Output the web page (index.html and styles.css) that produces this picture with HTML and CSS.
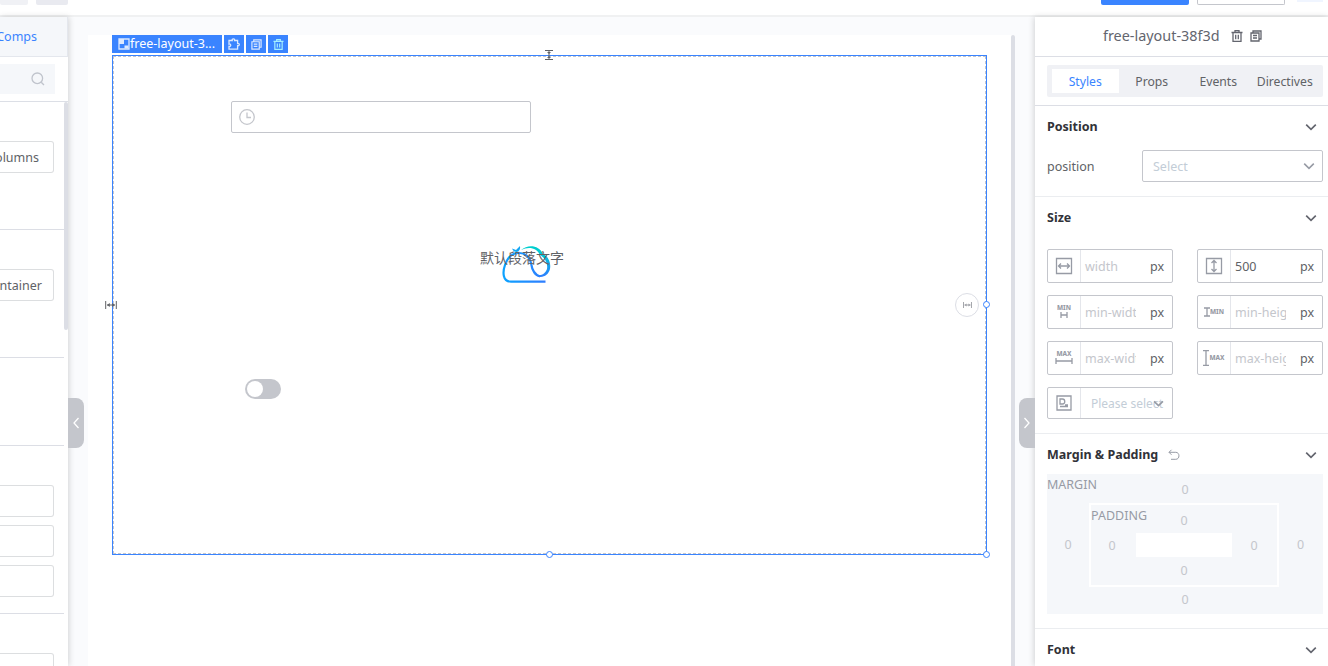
FILE: index.html
```html
<!DOCTYPE html>
<html lang="en">
<head>
<meta charset="utf-8">
<title>Layout designer</title>
<link rel="stylesheet" href="styles.css">
</head>
<body>
<svg class="symbols" aria-hidden="true">
  <symbol id="trash" viewBox="0 0 12 12"><path d="M.5 2.5h11M4 2V.7h4V2M2 3v8.300h8V3M4.700 4.800v4.400M7.300 4.800v4.400"/></symbol>
  <symbol id="copy" viewBox="0 0 12 12"><path d="M3 2.500V1h8v8H9.500M1 3h8v8H1zM3 5.500h4M3 8h4"/></symbol>
  <symbol id="down" viewBox="0 0 12 12"><path d="M1.200 3.700 6 8.300l4.800-4.600"/></symbol>
  <symbol id="span" viewBox="0 0 12 10"><path d="M.7 1v8M11.300 1v8M2 5h8"/><path class="solid" d="M2 5l2.800-2v4zM10 5l-2.800-2v4z"/></symbol>
</svg>
<header class="topbar">
  <span class="chip chip-a"></span><span class="chip chip-b"></span>
  <span class="action primary"></span><span class="action"></span><span class="action-more"></span>
</header>
<main class="workspace">
  <aside class="comps">
    <div class="comps-tab">Comps</div>
    <div class="search-row"><div class="search">
      <svg width="14" height="14" viewBox="0 0 14 14"><circle cx="6.300" cy="6.300" r="5.300"/><path d="M10.200 10.200l2.800 2.800"/></svg>
    </div></div>
    <div class="comps-list">
      <section class="group tall"><div class="item">olumns</div></section>
      <section class="group tall"><div class="item container">ontainer</div></section>
      <section class="group short"></section>
      <section class="group triple"><div class="item"></div><div class="item"></div><div class="item"></div></section>
      <section class="group"><div class="item"></div></section>
      <i class="list-scroll"></i>
    </div>
  </aside>

  <div class="stage">
    <div class="page">
      <div class="toolbar">
        <span class="node-name"><svg width="12" height="12" viewBox="0 0 12 12"><path d="M1 1h10v10H1z"/><path class="solid" d="M1 1h5v5H1zM6.500 7.500h4v3h-4z"/></svg><span>free-layout-3...</span></span>
        <span class="tool"><svg width="12" height="12" viewBox="0 0 12 12"><path d="M1 2.500h3.200c-.6-2.200 3-2.200 2.400 0h3v3c2.300-.5 2.300 2.700 0 2.200v3.500H1V8.300c2.300.6 2.300-2.800 0-2.200z"/></svg></span>
        <span class="tool"><svg width="11" height="11"><use href="#copy"/></svg></span>
        <span class="tool cyan"><svg width="11" height="11"><use href="#trash"/></svg></span>
      </div>
      <div class="free-layout">
        <div class="date-input"><svg width="16" height="16" viewBox="0 0 16 16"><circle cx="8" cy="8" r="7.300"/><path d="M8 3.500v5h4"/></svg></div>
        <svg class="cloud" width="50" height="40" viewBox="0 0 50 40">
          <defs>
            <linearGradient id="body" x1="0" y1="0" x2="1" y2="0"><stop offset="0" stop-color="#0ca2ff"/><stop offset="1" stop-color="#2f7dff"/></linearGradient>
            <linearGradient id="lobe" x1="0" y1="0" x2="0" y2="1"><stop offset="0" stop-color="#00d0cc"/><stop offset=".35" stop-color="#00c0dc"/><stop offset="1" stop-color="#2f7dff"/></linearGradient>
          </defs>
          <path d="M43.500 36.700H9C.5 36.500.5 27 3 20 6 11 12 7 18 8c6 .5 10 5 11 10 1 7 4 12 9 13.500" fill="none" stroke="url(#body)" stroke-width="2.200"/>
          <path d="M19 5C26-1 37 0 41 9c6 3 8 9 7 15-2 8-11 11-17 4 6 4 12 2 14-4 1-6-2-11-7-14C35 3 27 1 19 5z" fill="url(#lobe)"/>
          <path d="M10 3.500 14 5l4-4c.5 3-.5 5-3 6-2.500 0-4-1-5-3.500z" fill="#12a6f5"/>
        </svg>
        <p class="paragraph">默认段落文字</p>
        <div class="switch"></div>
        <svg class="grip-top" width="10" height="12" viewBox="0 0 10 12"><path d="M1 1.500h8M1 10.500h8M5 2v8"/><path class="solid" d="M5 5l2-2H3zM5 7l2 2H3z"/></svg>
        <svg class="grip-left" width="12" height="10"><use href="#span"/></svg>
        <div class="width-lock"><svg width="9" height="8"><use href="#span"/></svg></div>
        <i class="handle east"></i><i class="handle south"></i><i class="handle corner"></i>
      </div>
      <i class="page-scroll"></i>
    </div>
    <div class="collapse left"><svg width="8" height="12" viewBox="0 0 8 12"><path d="M6.500 1 2 6l4.500 5"/></svg></div>
    <div class="collapse right"><svg width="8" height="12" viewBox="0 0 8 12"><path d="M1.500 1 6 6l-4.500 5"/></svg></div>
  </div>

  <aside class="inspector">
    <div class="title"><span class="title-text">free-layout-38f3d</span><svg width="12" height="12"><use href="#trash"/></svg><svg width="12" height="12"><use href="#copy"/></svg></div>
    <div class="tabs-row"><nav class="tabs"><span class="tab active">Styles</span><span class="tab">Props</span><span class="tab">Events</span><span class="tab">Directives</span></nav></div>

    <section class="block">
      <h2>Position<svg class="chev" width="12" height="12"><use href="#down"/></svg></h2>
      <div class="position-row"><span class="prop-name">position</span><div class="select"><span>Select</span><svg width="12" height="12"><use href="#down"/></svg></div></div>
    </section>

    <section class="block">
      <h2>Size<svg class="chev" width="12" height="12"><use href="#down"/></svg></h2>
      <div class="sizes">
        <div class="field"><span class="icon"><svg width="18" height="18" viewBox="0 0 18 18"><path d="M1.500 1.500h15v15h-15zM3.500 9h11M6 6.500 3.500 9 6 11.500M12 6.500 14.500 9 12 11.500"/></svg></span><span class="value">width</span><span class="unit">px</span></div>
        <div class="field"><span class="icon"><svg width="18" height="18" viewBox="0 0 18 18"><path d="M1.500 1.500h15v15h-15zM9 3.500v11M6.500 6 9 3.500 11.500 6M6.500 12 9 14.500 11.500 12"/></svg></span><span class="value filled">500</span><span class="unit">px</span></div>
        <div class="field"><span class="icon stack"><b>MIN</b><svg width="8" height="6" viewBox="0 0 8 6"><path d="M1 0v6M7 0v6M1 3h6"/></svg></span><span class="value">min-width</span><span class="unit">px</span></div>
        <div class="field"><span class="icon side"><svg width="6" height="10" viewBox="0 0 6 10"><path d="M0 1h6M0 9h6M3 1v8"/></svg><b>MIN</b></span><span class="value">min-height</span><span class="unit">px</span></div>
        <div class="field"><span class="icon stack"><b>MAX</b><svg width="18" height="6" viewBox="0 0 18 6"><path d="M1 0v6M17 0v6M1 3h16"/></svg></span><span class="value">max-width</span><span class="unit">px</span></div>
        <div class="field"><span class="icon side"><svg width="6" height="16" viewBox="0 0 6 16"><path d="M0 .7h6M0 15.300h6M3 1v14"/></svg><b>MAX</b></span><span class="value">max-height</span><span class="unit">px</span></div>
        <div class="field display"><span class="icon"><svg width="16" height="16" viewBox="0 0 16 16"><path d="M1 1h14v14H1zM4 4h2.500c3 0 3 5 0 5H4zM4 11.500h8M9 10h3"/></svg></span><span class="value">Please select</span><svg class="field-chev" width="11" height="11"><use href="#down"/></svg></div>
      </div>
    </section>

    <section class="block">
      <h2>Margin &amp; Padding<svg class="undo" width="12" height="12" viewBox="0 0 12 12"><path d="M3.500.8 1 3.300l2.500 2.500M1 3.300h6.800c4.200 0 4.200 7 0 7H3"/></svg><svg class="chev" width="12" height="12"><use href="#down"/></svg></h2>
      <div class="margin-box">
        <span class="box-label">MARGIN</span>
        <span class="n top">0</span><span class="n west">0</span>
        <div class="padding-box">
          <span class="box-label">PADDING</span>
          <span class="n top">0</span><span class="n west">0</span><div class="core"></div><span class="n east-n">0</span><span class="n bottom">0</span>
        </div>
        <span class="n east-n">0</span><span class="n bottom">0</span>
      </div>
    </section>
    <section class="block"><h2>Font<svg class="chev" width="12" height="12"><use href="#down"/></svg></h2></section>
  </aside>
</main>
</body>
</html>
```

FILE: styles.css
```css
* { box-sizing: border-box; }
body { margin: 0; width: 1328px; height: 666px; overflow: hidden; background: #fff; color: #606266; font: 13px/20px "Noto Sans", "Noto Sans CJK SC", sans-serif; }
svg { display: block; flex: none; fill: none; stroke: currentColor; stroke-width: 1.3; }
.solid { fill: currentColor; stroke: none; }
.symbols { position: absolute; width: 0; height: 0; }

.topbar { display: flex; align-items: flex-start; height: 17px; border-bottom: 2px solid #f0f1f2; }
.chip { height: 5px; background: #e9eaf0; border-radius: 0 0 2px 2px; }
.chip-a { width: 28px; background: #f0f1f5; }
.chip-b { width: 32px; margin-left: 8px; }
.action { width: 88px; height: 5px; margin-left: 8px; border: 1px solid #c4c6cc; border-top: 0; border-radius: 0 0 2px 2px; }
.action.primary { margin-left: 1033px; border: 0; background: #3a84ff; }
.action-more { width: 26px; height: 2px; margin-left: 12px; background: #f0f5ff; }
.workspace { display: flex; height: 649px; }

.comps { position: relative; z-index: 2; width: 68px; flex: none; background: #fff; box-shadow: 1px 0 6px rgba(0,0,0,.16); }
.comps-tab { height: 40px; padding-right: 30px; border: 1px solid #e4e7ed; border-width: 0 1px 1px 0; background: #f5f7fa; color: #3a84ff; font-size: 12.500px; line-height: 40px; display: flex; justify-content: flex-end; }
.search-row { height: 45px; padding-top: 7px; border-bottom: 1px solid #dcdfe6; }
.search { display: flex; align-items: center; justify-content: flex-end; width: 55px; height: 30px; padding-right: 10px; background: #f5f7fa; color: #c0c4cc; }
.comps-list { position: relative; height: 564px; overflow: hidden; }
.group { display: flex; flex-direction: column; gap: 8px; width: 64px; padding-top: 39px; border-bottom: 1px solid #dcdee5; }
.tall { height: 128px; }
.short { height: 88px; }
.triple { height: 168px; }
.item { display: flex; align-items: center; justify-content: flex-end; flex: none; width: 54px; height: 32px; padding: 2px 14px 0 0; border: 1px solid #dcdee0; border-left: 0; border-radius: 0 3px 3px 0; font-size: 12.500px; }
.item.container { padding-right: 11px; }
.list-scroll { position: absolute; top: 0; right: 0; width: 4px; height: 228px; border-radius: 2px; background: #dcdee5; }

.stage { position: relative; width: 967px; padding: 18px 20px 0; background: #fafbfd; }
.page { position: relative; height: 631px; background: #fff; }
.page-scroll { position: absolute; top: 0; right: 0; width: 4px; height: 100%; background: #dcdee5; border-radius: 2px 2px 0 0; }
.toolbar { display: flex; gap: 2px; height: 18px; margin-left: 24px; color: #fff; }
.node-name { display: flex; align-items: center; width: 110px; padding-left: 6px; background: #3a84ff; font-size: 12.500px; white-space: nowrap; }
.node-name svg { color: #dce9ff; }
.tool { display: grid; place-items: center; width: 20px; background: #3a84ff; color: #dce9ff; }
.tool.cyan { color: #a5f0ff; }
.free-layout { position: relative; width: 875px; height: 500px; margin: 2px 0 0 24px; border: 1px solid #3a84ff; outline: 1px dashed #c4c6cc; outline-offset: -2px; }
.date-input { position: absolute; left: 118px; top: 45px; width: 300px; height: 32px; padding: 7px; border: 1px solid #c4c6cc; border-radius: 2px; color: #c4c6cc; }
.cloud { position: absolute; left: 389px; top: 189px; stroke: none; }
.paragraph { position: absolute; left: 367px; top: 192px; margin: 0; font-size: 14px; white-space: nowrap; }
.switch { position: absolute; left: 132px; top: 323px; width: 36px; height: 20px; border-radius: 10px; background: #c4c6cc; }
.switch::after { content: ""; display: block; width: 16px; height: 16px; margin: 2px; border-radius: 50%; background: #fff; }
.grip-top { position: absolute; left: 431px; top: -7px; stroke-width: 1; }
.grip-left { position: absolute; left: -8px; top: 244px; stroke-width: 1; }
.width-lock { position: absolute; left: 842px; top: 237px; display: grid; place-items: center; width: 24px; height: 24px; border: 1px solid #dcdee5; border-radius: 50%; color: #a0a2a8; }
.handle { position: absolute; width: 7px; height: 7px; border: 1px solid #3a84ff; border-radius: 50%; background: #fff; }
.east { left: 870px; top: 245px; }
.south { left: 433px; top: 495px; }
.corner { left: 870px; top: 495px; }
.collapse { position: absolute; z-index: 3; top: 381px; display: grid; place-items: center; width: 16px; height: 50px; background: #c4c6cc; color: #fff; }
.collapse.left { left: 0; border-radius: 0 8px 8px 0; }
.collapse.right { right: 0; border-radius: 8px 0 0 8px; }

.inspector { position: relative; z-index: 2; width: 293px; flex: none; background: #fff; box-shadow: -1px 0 6px rgba(0,0,0,.16); }
.title { display: flex; align-items: center; height: 40px; padding: 0 0 2px 68px; border-bottom: 1px solid #dcdee5; color: #63656e; }
.title-text { width: 117px; margin-right: 11px; font-size: 14.400px; white-space: nowrap; }
.title svg + svg { margin-left: 7px; }
.tabs-row { height: 49px; padding: 8px 5px 8px 12px; border-bottom: 1px solid #dcdee5; }
.tabs { display: grid; grid-template-columns: repeat(4, 1fr); height: 32px; padding: 4px 5px; background: #f0f1f5; border-radius: 2px; }
.tab { display: flex; align-items: center; justify-content: center; padding-top: 2px; font-size: 12.200px; }
.active { background: #fff; color: #3a84ff; }
.block { padding: 0 5px 14px 12px; border-bottom: 1px solid #ebedf0; }
h2 { display: flex; align-items: center; height: 40px; margin: 0; padding-top: 1px; color: #313238; font-size: 12.500px; font-weight: 700; }
.chev { margin: 0 6px 0 auto; color: #63656e; stroke-width: 1.700; }
.undo { margin-left: 10px; color: #979ba5; stroke-width: 1; }
.position-row { display: flex; align-items: center; justify-content: space-between; height: 32px; margin-top: 4px; font-size: 12.500px; }
.prop-name, .select span { padding-top: 2px; }
.select { display: flex; align-items: center; justify-content: space-between; width: 181px; height: 32px; padding: 0 7px 0 10px; border: 1px solid #c4c6cc; border-radius: 2px; color: #c3cdd7; font-size: 12.500px; }
.select svg { color: #979ba5; stroke-width: 1.600; }
.sizes { display: grid; grid-template-columns: 126px 126px; gap: 12px 24px; margin-top: 12px; }
.field { position: relative; display: flex; align-items: center; height: 34px; border: 1px solid #c4c6cc; border-radius: 2px; }
.field.display { height: 32px; }
.icon { display: flex; align-items: center; justify-content: center; flex: none; width: 33px; height: 100%; border-right: 1px solid #e4e6eb; color: #979ba5; }
.icon b { font-size: 6.400px; line-height: 8px; font-weight: 800; }
.stack { flex-direction: column; padding-bottom: 2px; }
.side { gap: 0; }
.value { width: 55px; padding: 2px 0 0 4px; overflow: hidden; color: #c4c6cc; font-size: 12.500px; white-space: nowrap; }
.filled { color: #606266; }
.unit { margin-left: auto; padding: 2px 8px 0 0; font-size: 12.500px; }
.display .value { width: 90px; padding-left: 10px; color: #c3cdd7; font-size: 12px; }
.field-chev { position: absolute; right: 8px; top: 10px; color: #979ba5; stroke-width: 1.800; }

.margin-box, .padding-box { position: relative; display: grid; background: #f5f7fa; }
.margin-box { height: 140px; grid-template-columns: 42px 190px 44px; grid-template-rows: 29px 84px 27px; }
.padding-box { border: 2px solid #fff; grid-area: 2 / 2; grid-template-columns: 45px 96px 45px; grid-template-rows: 28px 24px 28px; }
.box-label { position: absolute; left: 0; top: 1px; color: #979ba5; font-size: 12.500px; }
.n { display: flex; align-items: center; justify-content: center; color: #c4c6cc; font-size: 12.500px; }
.top { grid-area: 1 / 2; padding-top: 3px; }
.west { grid-area: 2 / 1; }
.east-n { grid-area: 2 / 3; padding-right: 1px; }
.bottom { grid-area: 3 / 2; padding-bottom: 1px; }
.margin-box > .top, .margin-box > .bottom { padding-left: 2px; }
.padding-box > .n { color: #c4c6cc; }
.padding-box > .west { padding: 1px 3px 0 0; }
.padding-box > .east-n { padding-top: 1px; }
.core { grid-area: 2 / 2; background: #fff; }
```
